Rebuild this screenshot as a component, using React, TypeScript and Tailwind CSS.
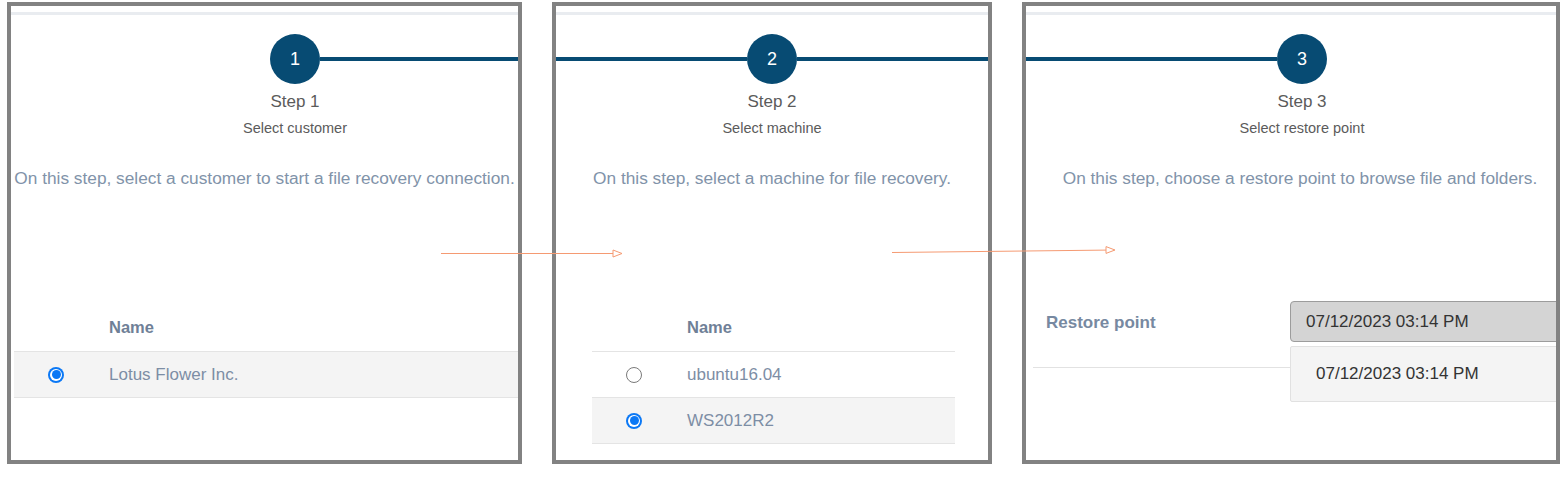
import React from "react"

const font = { fontFamily: '"Liberation Sans", Arial, sans-serif' }

function Radio({ checked }: { checked?: boolean }) {
  if (checked) {
    return (
      <div className="w-[16px] h-[16px] rounded-full bg-[#0b78f5] p-[2px]">
        <div className="w-full h-full rounded-full bg-white p-[1.5px]">
          <div className="w-full h-full rounded-full bg-[#0b78f5]" />
        </div>
      </div>
    )
  }
  return <div className="w-[16px] h-[16px] rounded-full border-[1.5px] border-[#7a7a7a] bg-white" />
}

interface StepProps {
  left: string
  right: string
  n: number
  title: string
  subtitle: string
}

function Step({ left, right, n, title, subtitle }: StepProps) {
  return (
    <div className="mt-[19px] flex">
      <div className={left} />
      <div className="w-[50px] shrink-0 flex flex-col items-center">
        <div className="w-[50px] h-[50px] rounded-full bg-[#074b73] flex items-center justify-center text-white text-[18px]">
          {n}
        </div>
        <div className="mt-[8px] text-[17px] leading-[20px] text-[#5b5b5b] whitespace-nowrap">{title}</div>
        <div className="mt-[7px] text-[14.5px] leading-[18px] text-[#5b5b5b] whitespace-nowrap">{subtitle}</div>
      </div>
      <div className={right} />
    </div>
  )
}

function TopLine() {
  return <div className="mt-[6px] h-[3px] shrink-0 bg-[#e9ecf0]" />
}

export default function App() {
  return (
    <div className="relative w-[1568px] h-[483px] bg-white flex items-start" style={font}>
      {/* Step 1 */}
      <section className="ml-[7px] mt-[2px] w-[515px] h-[462px] shrink-0 border-4 border-[#828282] bg-white flex flex-col overflow-hidden">
        <TopLine />
        <Step
          left="w-[259px] shrink-0"
          right="flex-1 mt-[23px] h-[4px] bg-[#074b73]"
          n={1}
          title="Step 1"
          subtitle="Select customer"
        />
        <p className="mt-[31px] text-center text-[17.3px] leading-[20px] text-[#8193a9] whitespace-nowrap">
          On this step, select a customer to start a file recovery connection.
        </p>
        <div className="mt-[116px] ml-[3px]">
          <div className="h-[47px] flex items-center">
            <div className="w-[84px]" />
            <div className="pl-[11px] text-[16.5px] font-bold text-[#6f8097]">Name</div>
          </div>
          <div className="h-[47px] flex items-center bg-[#f4f4f4] border-y border-[#e4e4e4]">
            <div className="w-[84px] flex justify-center">
              <Radio checked />
            </div>
            <div className="pl-[11px] text-[17px] text-[#7d8ea5]">Lotus Flower Inc.</div>
          </div>
        </div>
      </section>

      {/* Step 2 */}
      <section className="ml-[30px] mt-[2px] w-[440px] h-[462px] shrink-0 border-4 border-[#828282] bg-white flex flex-col overflow-hidden">
        <TopLine />
        <Step
          left="w-[191px] shrink-0 mt-[23px] h-[4px] bg-[#074b73]"
          right="flex-1 mt-[23px] h-[4px] bg-[#074b73]"
          n={2}
          title="Step 2"
          subtitle="Select machine"
        />
        <p className="mt-[31px] text-center text-[17.3px] leading-[20px] text-[#8193a9] whitespace-nowrap">
          On this step, select a machine for file recovery.
        </p>
        <div className="mt-[116px] ml-[36px] w-[363px]">
          <div className="h-[47px] flex items-center">
            <div className="w-[84px]" />
            <div className="pl-[11px] text-[16.5px] font-bold text-[#6f8097]">Name</div>
          </div>
          <div className="h-[46px] flex items-center border-t border-[#e4e4e4]">
            <div className="w-[84px] flex justify-center">
              <Radio />
            </div>
            <div className="pl-[11px] text-[17px] text-[#7d8ea5]">ubuntu16.04</div>
          </div>
          <div className="h-[47px] flex items-center bg-[#f4f4f4] border-y border-[#e4e4e4]">
            <div className="w-[84px] flex justify-center">
              <Radio checked />
            </div>
            <div className="pl-[11px] text-[17px] text-[#7d8ea5]">WS2012R2</div>
          </div>
        </div>
      </section>

      {/* Step 3 */}
      <section className="ml-[30px] mt-[2px] w-[538px] h-[462px] shrink-0 border-4 border-[#828282] bg-white flex flex-col overflow-hidden">
        <TopLine />
        <Step
          left="w-[251px] shrink-0 mt-[23px] h-[4px] bg-[#074b73]"
          right="flex-1"
          n={3}
          title="Step 3"
          subtitle="Select restore point"
        />
        <p className="mt-[31px] pl-[18px] text-center text-[17.3px] leading-[20px] text-[#8193a9] whitespace-nowrap">
          On this step, choose a restore point to browse file and folders.
        </p>
        <div className="mt-[90px] pl-[7px] flex">
          <div className="w-[257px] h-[90px] shrink-0 flex items-center pl-[13px] border-b border-[#e2e2e2]">
            <span className="text-[17px] font-bold text-[#7789a1]">Restore point</span>
          </div>
          <div className="relative flex-1">
            <div className="mt-[23px] w-[300px] h-[41px] flex items-center pl-[15px] bg-[#d4d4d4] border border-[#9c9c9c] rounded-l-[4px] text-[17px] text-[#333333]">
              07/12/2023 03:14 PM
            </div>
            <div className="absolute top-[68px] left-0 w-[300px] h-[56px] flex items-center pl-[25px] bg-[#f4f4f4] border border-[#e1e1e1] rounded-[2px] text-[17px] text-[#333333]">
              07/12/2023 03:14 PM
            </div>
          </div>
        </div>
      </section>

      {/* annotation arrows */}
      <svg className="absolute inset-0 pointer-events-none" width="1568" height="483" viewBox="0 0 1568 483">
        <g stroke="#f59a72" strokeWidth="1" fill="none">
          <line x1="441" y1="253.5" x2="621" y2="253.5" />
          <polygon points="613,250 622,253.5 613,257" fill="#ffffff" />
          <line x1="892" y1="252.5" x2="1114" y2="250" />
          <polygon points="1106,246.6 1115,250 1106,253.4" fill="#ffffff" />
        </g>
      </svg>
    </div>
  )
}
